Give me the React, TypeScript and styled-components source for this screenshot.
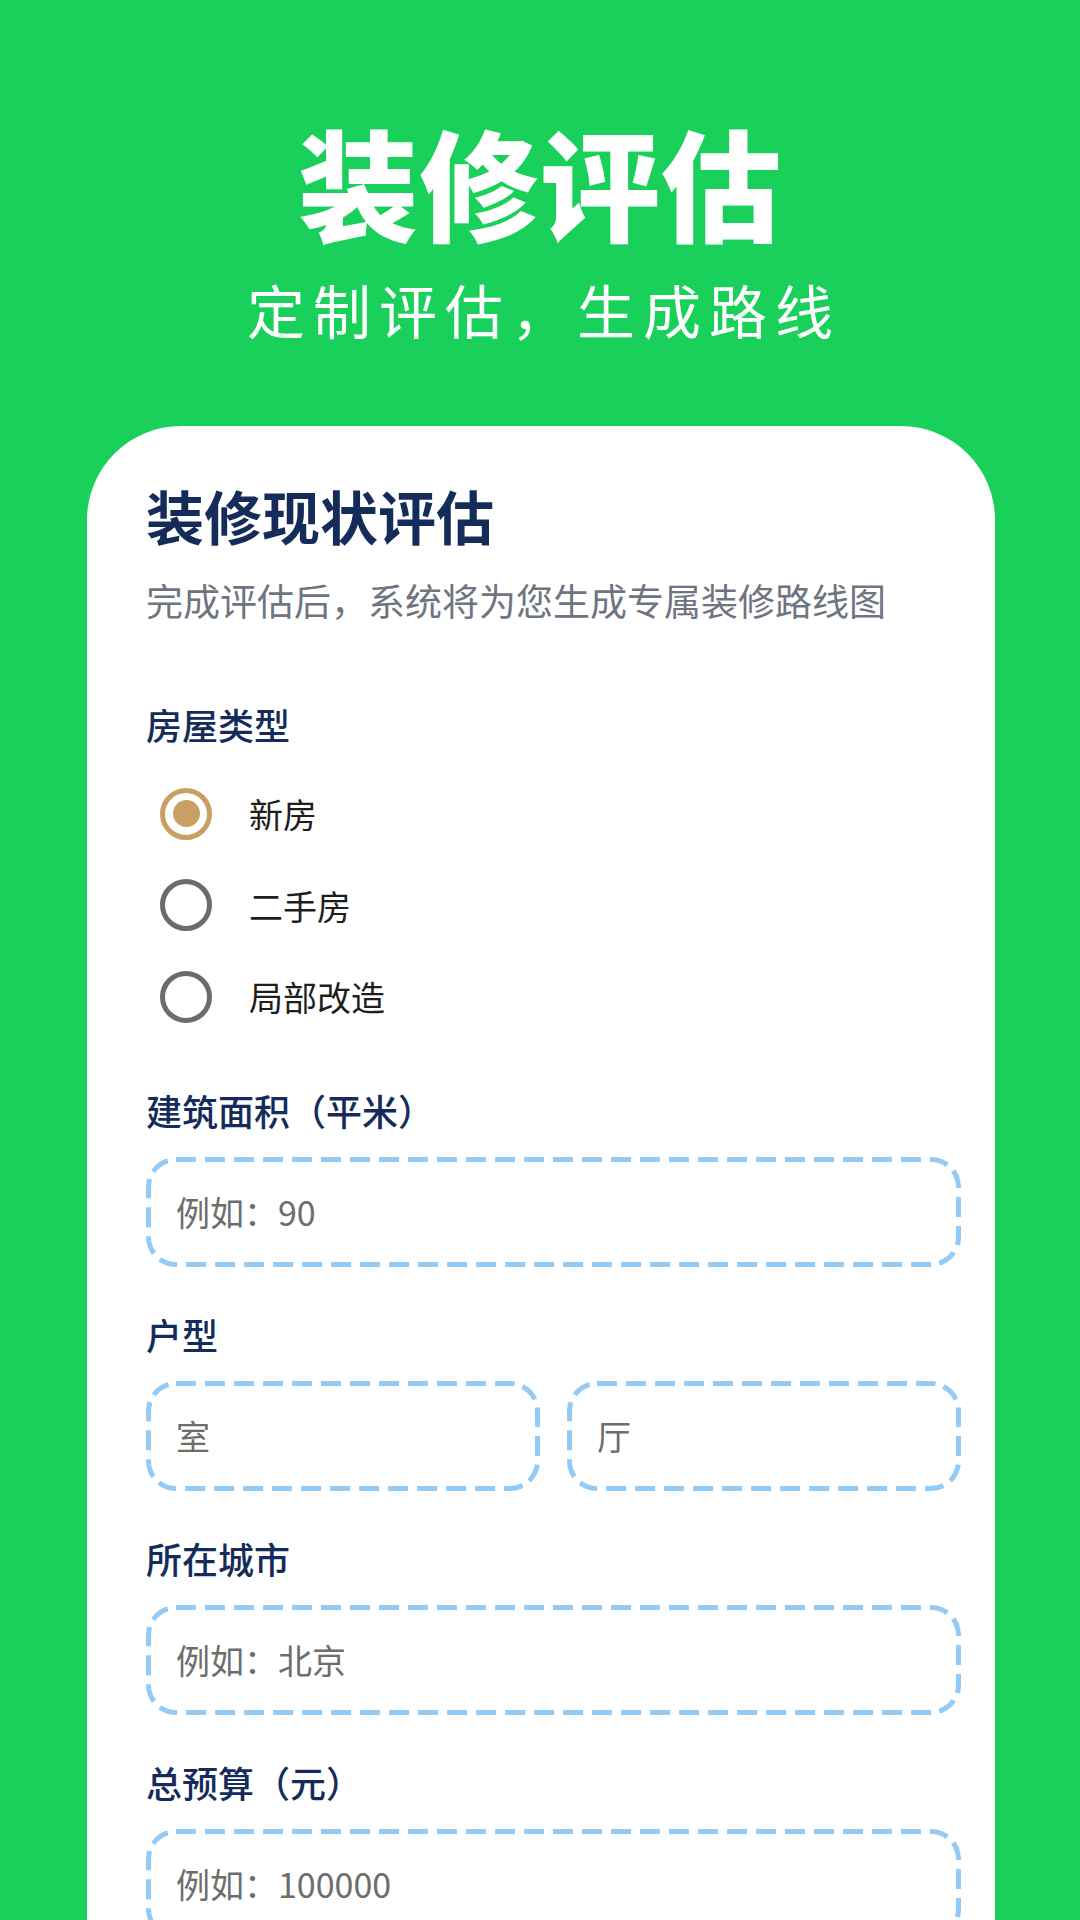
import styled, { createGlobalStyle } from "styled-components";

const GlobalStyle = createGlobalStyle`
  html, body {
    margin: 0;
    padding: 0;
    background: #19d05b;
  }
  * {
    box-sizing: border-box;
  }
  body {
    font-family: "Noto Sans CJK SC", "Noto Sans", sans-serif;
  }
`;

// dashed outline drawn as svg so the dash length matches the design
const dashedFrame = `url("data:image/svg+xml,${encodeURIComponent(
  "<svg xmlns='http://www.w3.org/2000/svg' width='100%' height='100%'><rect x='0' y='0' width='100%' height='100%' rx='30' ry='30' fill='none' stroke='#93cbf6' stroke-width='10' stroke-dasharray='20 9'/></svg>"
)}")`;

const Page = styled.div`
  width: 1080px;
  height: 1920px;
  overflow: hidden;
  background: #19d05b;
  display: flex;
  flex-direction: column;
`;

const Hero = styled.header`
  display: flex;
  flex-direction: column;
  align-items: center;
  padding-top: 116px;
  padding-bottom: 79px;
  color: #ffffff;
`;

const HeroTitle = styled.h1`
  margin: 0;
  font-size: 120px;
  line-height: 130px;
  font-weight: 900;
  letter-spacing: 1px;
`;

const HeroSub = styled.p`
  margin: 26px 0 0;
  font-size: 58px;
  line-height: 75px;
  font-weight: 400;
  letter-spacing: 8px;
  padding-left: 8px;
`;

const Card = styled.main`
  flex: 1;
  margin: 0 85px 0 87px;
  background: #ffffff;
  border-radius: 94px 94px 0 0;
  padding: 52px 34px 0 59px;
  display: flex;
  flex-direction: column;
`;

const CardTitle = styled.h2`
  margin: 0;
  font-size: 58px;
  line-height: 74px;
  font-weight: 700;
  color: #152c5b;
`;

const CardDesc = styled.p`
  margin: 23px 0 74px;
  font-size: 37px;
  line-height: 50px;
  color: #6f7580;
`;

const Label = styled.div`
  font-size: 36px;
  line-height: 50px;
  font-weight: 500;
  color: #152c5b;
`;

const RadioGroup = styled.div`
  display: flex;
  flex-direction: column;
  margin: 19px 0 42px;
`;

const RadioRow = styled.label`
  display: flex;
  align-items: center;
  height: 91.5px;
  padding-left: 14px;
  gap: 37px;
`;

const RadioCircle = styled.span<{ $checked?: boolean }>`
  width: 52px;
  height: 52px;
  border-radius: 50%;
  border: 5px solid ${(p) => (p.$checked ? "#c9a063" : "#6b6b6b")};
  display: flex;
  align-items: center;
  justify-content: center;

  &::after {
    content: "";
    width: 27px;
    height: 27px;
    border-radius: 50%;
    background: #c9a063;
    display: ${(p) => (p.$checked ? "block" : "none")};
  }
`;

const RadioText = styled.span`
  font-size: 34px;
  color: #1e1e1e;
`;

const Field = styled.div`
  display: flex;
  flex-direction: column;
  margin-bottom: 42px;
`;

const InputRow = styled.div`
  display: grid;
  grid-template-columns: 1fr 1fr;
  gap: 27px;
  margin-top: 22px;
`;

const Input = styled.input<{ $top?: boolean }>`
  width: 100%;
  height: 110px;
  margin-top: ${(p) => (p.$top ? "22px" : "0")};
  border: none;
  border-radius: 30px;
  background: #ffffff ${dashedFrame} no-repeat;
  background-size: 100% 100%;
  padding: 0 0 0 30px;
  font-family: inherit;
  font-size: 34px;
  color: #333333;
  outline: none;

  &::placeholder {
    color: #6d6d6d;
  }
`;

const types = [
  { name: "新房", checked: true },
  { name: "二手房", checked: false },
  { name: "局部改造", checked: false },
];

const App = () => {
  return (
    <Page>
      <GlobalStyle />
      <Hero>
        <HeroTitle>装修评估</HeroTitle>
        <HeroSub>定制评估，生成路线</HeroSub>
      </Hero>
      <Card>
        <CardTitle>装修现状评估</CardTitle>
        <CardDesc>完成评估后，系统将为您生成专属装修路线图</CardDesc>

        <Label>房屋类型</Label>
        <RadioGroup>
          {types.map((t) => (
            <RadioRow key={t.name}>
              <RadioCircle $checked={t.checked} />
              <RadioText>{t.name}</RadioText>
            </RadioRow>
          ))}
        </RadioGroup>

        <Field>
          <Label>建筑面积（平米）</Label>
          <Input $top placeholder="例如：90" />
        </Field>

        <Field>
          <Label>户型</Label>
          <InputRow>
            <Input placeholder="室" />
            <Input placeholder="厅" />
          </InputRow>
        </Field>

        <Field>
          <Label>所在城市</Label>
          <Input $top placeholder="例如：北京" />
        </Field>

        <Field>
          <Label>总预算（元）</Label>
          <Input $top placeholder="例如：100000" />
        </Field>
      </Card>
    </Page>
  );
};

export default App;
